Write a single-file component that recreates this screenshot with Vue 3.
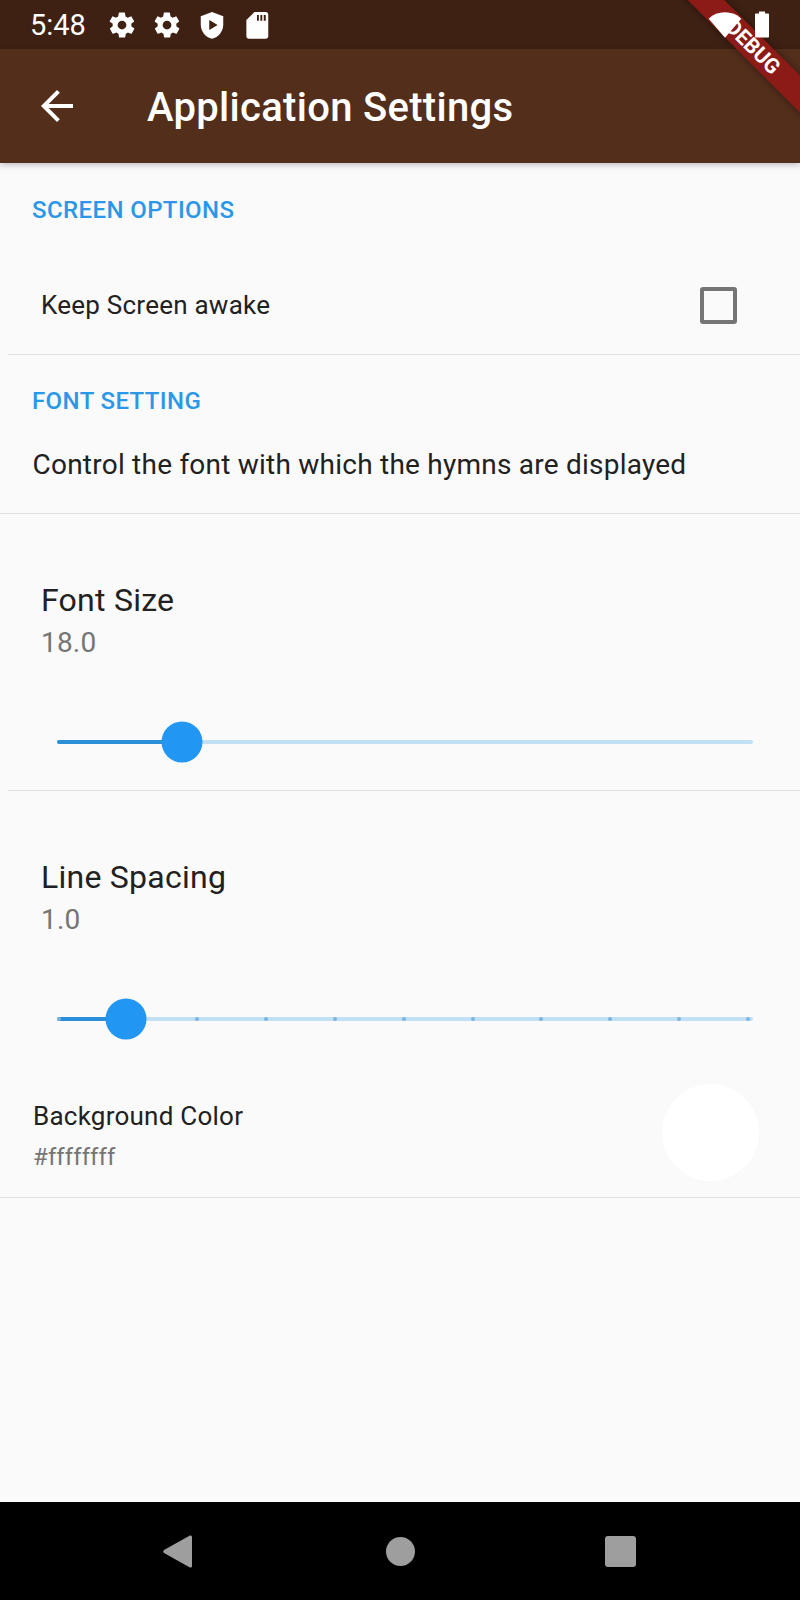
<template>
  <div class="screen">
    <div class="status-bar">
      <span class="clock">5:48</span>
      <svg class="st-icon" viewBox="0 0 24 24"><path :d="gearPath" /></svg>
      <svg class="st-icon" viewBox="0 0 24 24"><path :d="gearPath" /></svg>
      <svg class="st-icon" viewBox="0 0 24 24"><path fill-rule="evenodd" d="M12 1.500 3 5v6.500c0 5.400 3.800 10.300 9 11.500 5.200-1.200 9-6.100 9-11.500V5zM9.800 8l6.700 4-6.700 4z" /></svg>
      <svg class="st-icon" viewBox="0 0 24 24"><path fill-rule="evenodd" d="M19 1.500h-9L3.500 8v13c0 1.100.9 2 2 2H19c1.100 0 2-.9 2-2V3.500c0-1.100-.9-2-2-2zM12 4h1.500v4.500H12zm2.700 0h1.500v4.500h-1.500zm2.700 0H19v4.500h-1.600z" /></svg>
      <div class="status-right">
        <svg class="wifi" viewBox="0 0 24 24"><path d="M12 21 .5 7.500C3.500 4.500 7.500 3 12 3s8.500 1.500 11.500 4.500z" /></svg>
        <svg class="battery" viewBox="0 0 16 26"><path d="M5 0h6v2h3c.6 0 1 .4 1 1v22c0 .6-.4 1-1 1H2c-.6 0-1-.4-1-1V3c0-.6.4-1 1-1h3z" /></svg>
      </div>
    </div>

    <header class="app-bar">
      <svg class="back" viewBox="0 0 24 24"><path d="M20 11H7.830l5.590-5.590L12 4l-8 8 8 8 1.410-1.410L7.830 13H20z" /></svg>
      <h1 class="title">Application Settings</h1>
    </header>

    <main class="content">
      <h2 class="section first">SCREEN OPTIONS</h2>
      <div class="check-row">
        <span class="check-label">Keep Screen awake</span>
        <span class="checkbox"></span>
      </div>

      <h2 class="section second">FONT SETTING</h2>
      <p class="desc">Control the font with which the hymns are displayed</p>

      <section class="slider-tile font-size">
        <div class="tile-title">Font Size</div>
        <div class="tile-value">{{ fontSize.toFixed(1) }}</div>
        <div class="slider">
          <div class="track"></div>
          <div class="track-active" :style="{ width: fontPct + '%' }"></div>
          <div class="thumb" :style="{ left: fontPct + '%' }"></div>
        </div>
      </section>

      <section class="slider-tile line-spacing">
        <div class="tile-title">Line Spacing</div>
        <div class="tile-value">{{ lineSpacing.toFixed(1) }}</div>
        <div class="slider">
          <div class="track"></div>
          <div class="track-active" :style="{ width: linePct + '%' }"></div>
          <i v-for="t in ticks" :key="t" class="tick" :style="{ left: t + '%' }"></i>
          <div class="thumb" :style="{ left: linePct + '%' }"></div>
        </div>
      </section>

      <div class="color-row">
        <div class="color-text">
          <div class="color-title">Background Color</div>
          <div class="color-value">#ffffffff</div>
        </div>
        <div class="swatch"></div>
      </div>
    </main>

    <nav class="nav-bar">
      <svg class="nav-back" viewBox="0 0 29 33"><path d="M26.500.7c1.100-.7 2.500 0 2.500 1.300v29c0 1.300-1.400 2-2.500 1.300L1 18c-1-.7-1-2.300 0-3z" /></svg>
      <span class="nav-home"></span>
      <span class="nav-square"></span>
    </nav>

    <div class="debug-banner">DEBUG</div>
  </div>
</template>

<script setup>
const gearPath = 'M19.400 13c.1-.3.1-.7.1-1s0-.7-.1-1l2.100-1.600c.2-.2.2-.4.1-.6l-2-3.500c-.1-.2-.4-.3-.6-.2l-2.500 1c-.5-.4-1.100-.7-1.700-1l-.4-2.600c0-.3-.2-.5-.5-.5h-4c-.2 0-.5.2-.5.400l-.4 2.700c-.6.2-1.100.6-1.700 1l-2.500-1c-.2-.1-.5 0-.6.2l-2 3.500c-.1.2-.1.4.1.6L4.600 11c0 .3-.1.7-.1 1s0 .7.1 1l-2.100 1.600c-.2.2-.2.4-.1.600l2 3.500c.1.2.4.3.6.2l2.500-1c.5.4 1.100.7 1.700 1l.4 2.600c0 .3.2.5.5.5h4c.2 0 .5-.2.5-.4l.4-2.700c.6-.2 1.200-.6 1.700-1l2.500 1c.2.1.5 0 .6-.2l2-3.500c.1-.2.1-.4-.1-.6zM12 15.500a3.500 3.500 0 1 1 0-7 3.500 3.500 0 0 1 0 7z'

const fontSize = 18
const lineSpacing = 1
const fontPct = 18
const linePct = 9.96
const ticks = [0.3, 10.2, 20.1, 30, 39.9, 49.8, 59.7, 69.6, 79.5, 89.4, 99.3]
</script>

<style scoped>
.screen {
  position: relative;
  width: 800px;
  height: 1600px;
  display: flex;
  flex-direction: column;
  overflow: hidden;
  background: #fafafa;
  font-family: Roboto, sans-serif;
  color: #212121;
}

.status-bar {
  height: 49px;
  flex: none;
  display: flex;
  align-items: center;
  padding: 0 30px 0 30px;
  background: #3e2113;
  color: #fff;
}

.clock {
  font-size: 29px;
  margin-right: 21px;
}

.st-icon {
  width: 30px;
  height: 30px;
  margin-right: 15px;
  fill: #fff;
}

.status-right {
  position: relative;
  z-index: 3;
  margin-left: auto;
  display: flex;
  align-items: center;
  gap: 12px;
}

.wifi {
  width: 34px;
  height: 34px;
  fill: #fff;
}

.battery {
  width: 16px;
  height: 27px;
  fill: #fff;
}

.app-bar {
  height: 114px;
  flex: none;
  display: flex;
  align-items: center;
  padding-left: 33px;
  background: #532e1b;
  box-shadow: 0 2px 6px rgba(0, 0, 0, 0.25);
  z-index: 1;
}

.back {
  width: 48px;
  height: 48px;
  fill: #fff;
}

.title {
  margin: 2px 0 0 66px;
  font-size: 40px;
  font-weight: 500;
  letter-spacing: 0.3px;
  color: #fff;
}

.content {
  flex: 1;
}

.section {
  margin: 0;
  padding-left: 32px;
  font-size: 24px;
  font-weight: 500;
  line-height: 28px;
  letter-spacing: 0.4px;
  color: #2b97e8;
}

.section.first {
  padding-top: 33px;
}

.section.second {
  padding-top: 32px;
}

.check-row {
  margin-left: 8px;
  padding: 32px 63px 0 33px;
  box-sizing: border-box;
  height: 131px;
  display: flex;
  align-items: center;
  justify-content: space-between;
  border-bottom: 1px solid #e0e0e0;
}

.check-label {
  font-size: 26px;
  letter-spacing: 0.24px;
}

.checkbox {
  width: 37px;
  height: 37px;
  box-sizing: border-box;
  border: 4px solid #757575;
  border-radius: 3px;
}

.desc {
  margin: 0;
  padding: 32px 32px 30px 32.5px;
  font-size: 28px;
  letter-spacing: 0.23px;
  line-height: 36px;
  border-bottom: 1px solid #e0e0e0;
}

.slider-tile {
  margin-left: 8px;
  padding: 66px 33px 0;
}

.tile-title {
  font-size: 32px;
  letter-spacing: 0.25px;
  line-height: 40px;
}

.tile-value {
  margin-top: 3px;
  font-size: 28px;
  letter-spacing: 0.2px;
  line-height: 40px;
  color: #757575;
}

.slider {
  position: relative;
  height: 4px;
  margin: 77px 14px 0 16px;
}

.track {
  position: absolute;
  inset: 0;
  background: #c1dff5;
  border-radius: 2px;
}

.track-active {
  position: absolute;
  left: 0;
  top: 0;
  bottom: 0;
  background: #2b8fd8;
  border-radius: 2px;
}

.tick {
  position: absolute;
  top: 0;
  width: 4px;
  height: 4px;
  margin-left: -2px;
  border-radius: 50%;
  background: #7fb4dc;
}

.thumb {
  position: absolute;
  top: 2px;
  width: 41px;
  height: 41px;
  border-radius: 50%;
  background: #2196f3;
  transform: translate(-50%, -50%);
}

.font-size {
  padding-bottom: 46px;
  border-bottom: 1px solid #e0e0e0;
}

.line-spacing {
  padding-bottom: 0;
}

.color-row {
  display: flex;
  align-items: center;
  justify-content: space-between;
  margin-top: 63px;
  padding: 0 41px 16px 33px;
  border-bottom: 1px solid #e0e0e0;
}

.color-text {
  margin-top: 7px;
}

.color-title {
  font-size: 26px;
  letter-spacing: 0.24px;
  line-height: 32px;
}

.color-value {
  margin-top: 9px;
  font-size: 24px;
  letter-spacing: 0.1px;
  line-height: 32px;
  color: #757575;
}

.swatch {
  width: 97px;
  height: 97px;
  border-radius: 50%;
  background: #fff;
}

.nav-bar {
  height: 98px;
  flex: none;
  padding-right: 2px;
  background: #000;
  display: flex;
  align-items: center;
  justify-content: center;
}

.nav-back {
  width: 29px;
  height: 33px;
  fill: #9e9e9e;
}

.nav-home {
  width: 29px;
  height: 29px;
  margin: 0 190px 0 194px;
  border-radius: 50%;
  background: #9e9e9e;
}

.nav-square {
  width: 31px;
  height: 31px;
  border-radius: 3px;
  background: #9e9e9e;
}

.debug-banner {
  position: absolute;
  top: 34px;
  right: -53px;
  width: 200px;
  height: 26px;
  line-height: 26px;
  transform: rotate(45deg);
  background: #8c1a17;
  color: #fff;
  font-size: 21px;
  font-weight: 700;
  text-align: center;
  box-shadow: 0 0 8px rgba(0, 0, 0, 0.4);
  z-index: 2;
}
</style>

<style>
html, body {
  margin: 0;
  background: #fafafa;
}
</style>
